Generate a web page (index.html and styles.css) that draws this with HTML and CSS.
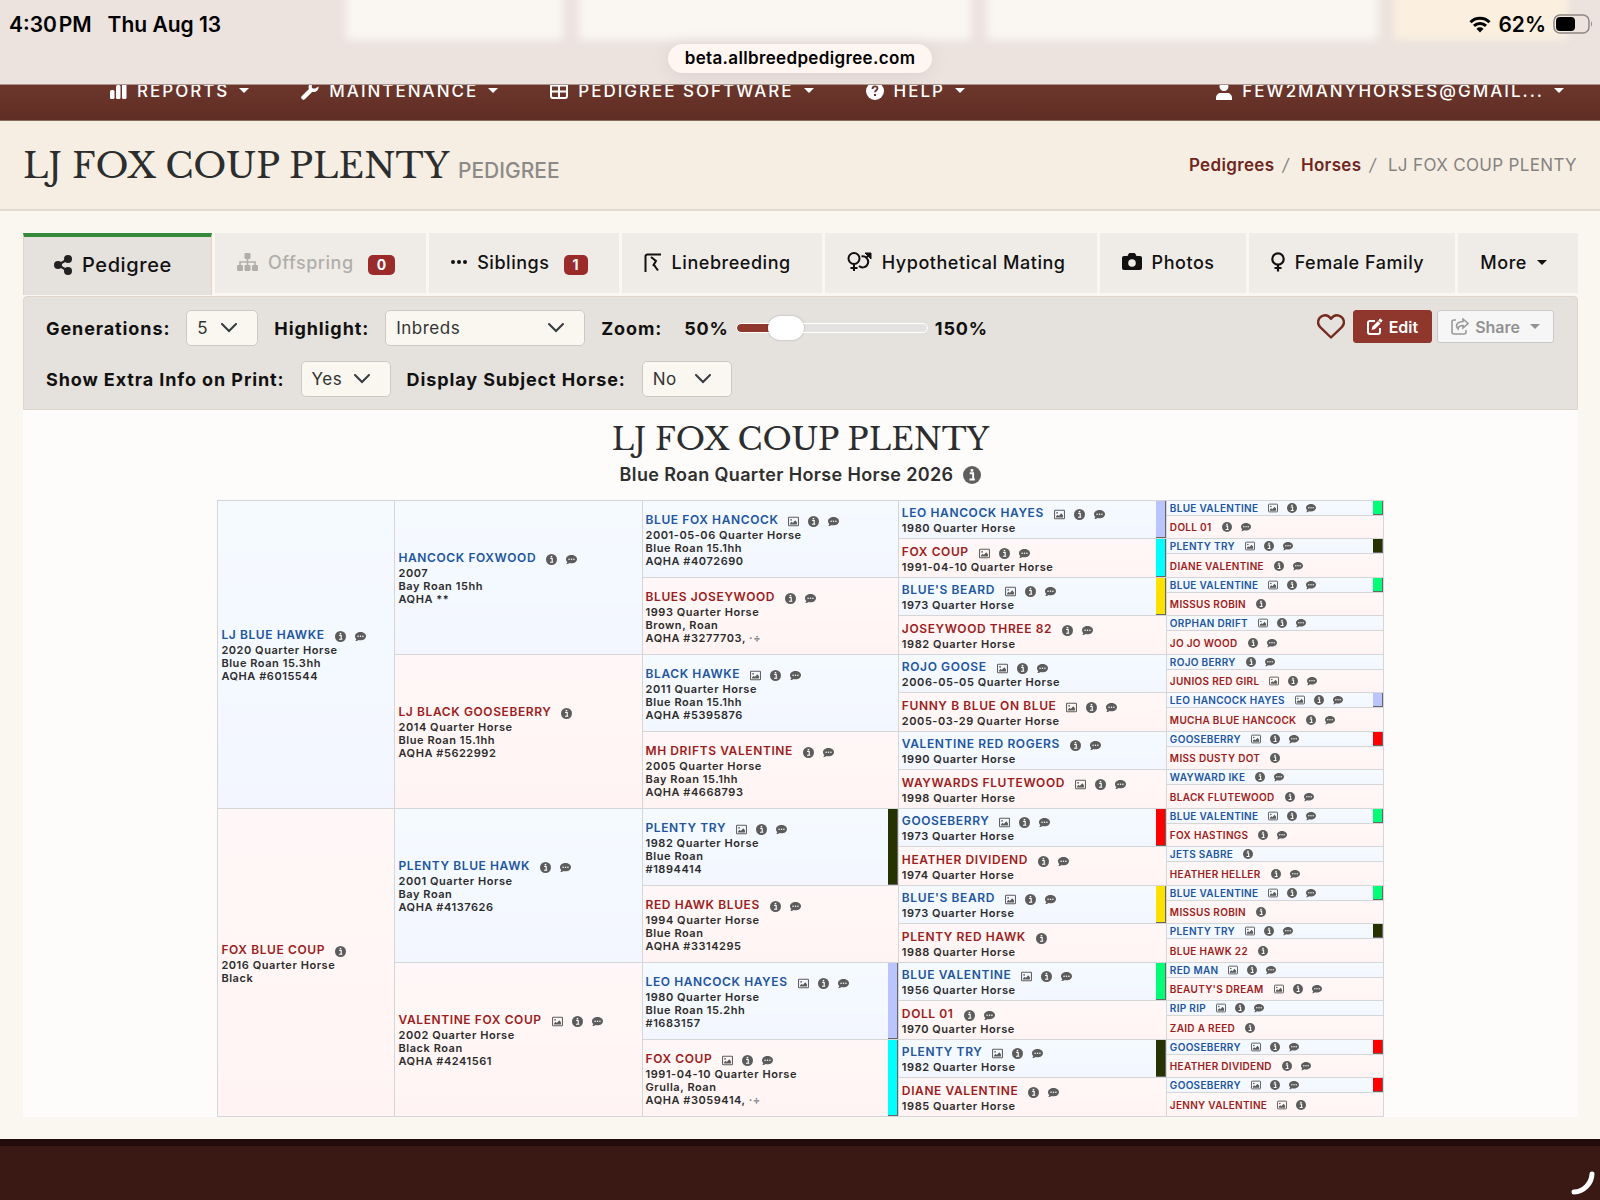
FILE: index.html
```
<!DOCTYPE html>
<html lang="en">
<head>
  <meta charset="UTF-8" />
  <meta name="viewport" content="width=device-width, initial-scale=1.0"/>
  <title>LJ FOX COUP PLENTY - Pedigree</title>
  <link rel="stylesheet" href="styles.css">
</head>
<body>
  <svg class="sprite" aria-hidden="true">
    <symbol id="i-info" viewBox="0 0 16 16"><circle cx="8" cy="8" r="8" fill="currentColor"/><path d="M6 6.500h3v5M5.800 12h4.800" fill="none" stroke="#fff" stroke-width="1.700"/><rect x="6.800" y="2.800" width="2.300" height="2.200" fill="#fff"/></symbol>
    <symbol id="i-chat" viewBox="0 0 16 16"><path d="M8 1.500c4.400 0 8 2.700 8 6s-3.600 6-8 6c-1 0-2-.1-2.900-.4-1 .8-2.700 1.600-4.800 1.600.9-.9 1.500-2 1.600-3C.7 10.600 0 9.200 0 7.500c0-3.300 3.600-6 8-6z" fill="currentColor"/><g fill="#fff"><circle cx="4.500" cy="7.500" r="1.100"/><circle cx="8" cy="7.500" r="1.100"/><circle cx="11.500" cy="7.500" r="1.100"/></g></symbol>
    <symbol id="i-image" viewBox="0 0 16 16"><rect x=".8" y="1.800" width="14.400" height="12.400" rx="1" fill="none" stroke="currentColor" stroke-width="1.500"/><circle cx="4.500" cy="5.500" r="1.300" fill="currentColor"/><path d="M3 12.500v-2l2.500-2 1.500 1.500L10.500 6 13 9v3.500z" fill="currentColor"/></symbol>
  </svg>

  <header class="browser-bar">
    <div class="backdrop"><i></i><i></i><i></i><i class="gold"></i></div>
    <div class="status">
      <span>4:30&#8202;PM</span>
      <span>Thu Aug 13</span>
      <div class="status-right">
        <svg width="22" height="17" viewBox="0 0 22 17" fill="none" stroke="#000" stroke-width="3"><path d="M1.500 6.200a13.500 13.500 0 0 1 19 0M5 9.900a8.500 8.500 0 0 1 12 0"/><path d="M11 16.500l-3.500-3.700a5 5 0 0 1 7 0z" fill="#000" stroke="none"/></svg>
        <span>62%</span>
        <svg width="40" height="20" viewBox="0 0 40 20"><rect x="1" y="1" width="35" height="18" rx="6" fill="none" stroke="#8f8785" stroke-width="1.500"/><rect x="3" y="3" width="19" height="14" rx="4"/><path d="M38 7q2 3 0 6z" fill="#8f8785"/></svg>
      </div>
    </div>
    <div class="address">beta.allbreedpedigree.com</div>
  </header>

  <nav class="main-nav">
    <a href="#"><svg width="17" height="18" viewBox="0 0 17 18" fill="#fff"><rect y="8" width="4.500" height="9" rx="1.500"/><rect x="6" y="3" width="4.500" height="14" rx="1.500"/><rect x="12" y="0" width="4.500" height="17" rx="1.500"/></svg>Reports<b class="caret"></b></a>
    <a href="#"><svg width="18" height="18" viewBox="0 0 18 18"><path d="M2.500 15.500L10 8" stroke="#fff" stroke-width="4.500" stroke-linecap="round"/><path d="M17.500 4.500a5 5 0 1 1-4-4.300L10.800 3v3.500h3.500z" fill="#fff"/></svg>Maintenance<b class="caret"></b></a>
    <a href="#"><svg width="18" height="18" viewBox="0 0 18 18" fill="none" stroke="#fff" stroke-width="2"><rect x="1" y="2" width="16" height="14" rx="2"/><path d="M1 3h16" stroke-width="3"/><path d="M9 3v13M1 9.500h16"/></svg>Pedigree Software<b class="caret"></b></a>
    <a href="#"><svg width="18" height="18" viewBox="0 0 18 18"><circle cx="9" cy="9" r="9" fill="#fff"/><path d="M6.500 7c0-3.500 5-3.500 5-.7 0 1.900-2.500 1.900-2.500 4" fill="none" stroke="#653026" stroke-width="1.800"/><rect x="8" y="12" width="2" height="2" fill="#653026"/></svg>Help<b class="caret"></b></a>
    <a href="#" class="user"><svg width="16" height="18" viewBox="0 0 16 18" fill="#fff"><circle cx="8" cy="4.500" r="4.500"/><path d="M0 18v-2c0-3 2-5 5-5h6c3 0 5 2 5 5v2z"/></svg>few2manyhorses@gmail...<b class="caret"></b></a>
  </nav>

  <section class="page-header">
    <h1>LJ FOX COUP PLENTY <small>PEDIGREE</small></h1>
    <div class="breadcrumb"><a href="#">Pedigrees</a><i>/</i><a href="#">Horses</a><i>/</i><span>LJ FOX COUP PLENTY</span></div>
  </section>

  <main>
    <div class="tabs">
      <a href="#" class="tab active"><svg width="18" height="20" viewBox="0 0 18 20" fill="#222"><circle cx="4" cy="10" r="4"/><circle cx="14" cy="4" r="4"/><circle cx="14" cy="16" r="4"/><path d="M14 4L4 10l10 6" fill="none" stroke="#222" stroke-width="2.200"/></svg>Pedigree</a>
      <a href="#" class="tab disabled"><svg width="21" height="18" viewBox="0 0 21 18" fill="#b0aeab"><rect x="7.500" width="6" height="6" rx="1.200"/><rect y="12" width="6" height="6" rx="1.200"/><rect x="7.500" y="12" width="6" height="6" rx="1.200"/><rect x="15" y="12" width="6" height="6" rx="1.200"/><path d="M10.500 5v8M3 13V9h15v4" fill="none" stroke="#b0aeab" stroke-width="1.600"/></svg>Offspring<span class="badge">0</span></a>
      <a href="#" class="tab"><svg width="16" height="6" viewBox="0 0 16 6" fill="#111"><circle cx="2" cy="3" r="2"/><circle cx="8" cy="3" r="2"/><circle cx="14" cy="3" r="2"/></svg>Siblings<span class="badge">1</span></a>
      <a href="#" class="tab"><svg width="18" height="19" viewBox="0 0 18 19" fill="none" stroke="#111" stroke-width="2"><path d="M1.500 19V3.500q0-2 2-2H17M7 4l5 4-2.500 4 2 1.500M12 8l-1.500-1M10 12l4 5.500"/></svg>Linebreeding</a>
      <a href="#" class="tab"><svg width="25" height="20" viewBox="0 0 25 20" fill="none" stroke="#111" stroke-width="2"><circle cx="7" cy="6.500" r="5.500"/><path d="M7 12v7M3.500 16h7M14.500 4.500a5.500 5.500 0 1 1-2.500 9.500M19 6l4-4"/><path d="M18 1h6v6z" fill="#111" stroke-width="1"/></svg>Hypothetical Mating</a>
      <a href="#" class="tab"><svg width="20" height="18" viewBox="0 0 20 18"><path d="M2 3h3.500L6.500 1q.4-1 1.500-1h4q1 0 1.500 1l1 2H18q2 0 2 2v10q0 2-2 2H2q-2 0-2-2V5q0-2 2-2z" fill="#111"/><circle cx="10" cy="10" r="3.800" fill="#efece7"/></svg>Photos</a>
      <a href="#" class="tab"><svg width="14" height="20" viewBox="0 0 14 20" fill="none" stroke="#111" stroke-width="2.200"><circle cx="7" cy="7" r="5.700"/><path d="M7 12.500V19.500M3.500 16h7"/></svg>Female Family</a>
      <a href="#" class="tab">More<b class="caret"></b></a>
    </div>

    <form class="toolbar">
      <div class="options">
        <div class="row">
          <label for="generations">Generations:</label>
          <select id="generations" class="w-sm"><option>5</option></select>
          <label for="highlight">Highlight:</label>
          <select id="highlight" class="w-lg"><option>Inbreds</option></select>
          <label for="zoom">Zoom:</label>
          <div class="zoom"><span>50%</span><input type="range" id="zoom" min="50" max="150" value="70"><span>150%</span></div>
        </div>
        <div class="row">
          <label for="extra">Show Extra Info on Print:</label>
          <select id="extra" class="w-md"><option>Yes</option></select>
          <label for="subject">Display Subject Horse:</label>
          <select id="subject" class="w-md"><option>No</option></select>
        </div>
      </div>
      <div class="actions">
        <button type="button" class="like" aria-label="Favorite"><svg width="28" height="25" viewBox="0 0 28 25" fill="none" stroke="#742a20" stroke-width="2.400" stroke-linejoin="round"><path d="M14 23.500L3.200 13.200C-.5 9.500 1 3.500 5.500 1.800 9 .5 12 2 14 4.800 16 2 19 .5 22.500 1.800 27 3.500 28.500 9.500 24.800 13.200z"/></svg></button>
        <button type="button" class="btn btn-edit"><svg width="16" height="17" viewBox="0 0 16 17" fill="none" stroke="#fff" stroke-width="2"><path d="M8 3H3Q1 3 1 5v9q0 2 2 2h8q2 0 2-2v-4"/><path d="M5.500 8.500L11 3l2.500 2.500L8 11l-3.500 1z" fill="#fff" stroke="none"/><path d="M11.800 2.200L13.200.8l2 2-1.400 1.400z" fill="#fff" stroke="#fff" stroke-width="1"/></svg>Edit</button>
        <button type="button" class="btn btn-share"><svg width="18" height="17" viewBox="0 0 18 17" fill="none" stroke="#999" stroke-width="1.600"><path d="M5 2H3Q1 2 1 4v10q0 2 2 2h10q2 0 2-2v-2"/><path d="M12 1l5 4.500L12 10V7.500C9 7.500 7.500 8.500 7 11 3.500 7 7 3.500 12 3.500z"/></svg>Share<b class="caret"></b></button>
      </div>
    </form>

    <div class="pedigree">
      <h2>LJ FOX COUP PLENTY</h2>
      <h3>Blue Roan Quarter Horse Horse 2026 <svg class="icon-lg"><use href="#i-info"/></svg></h3>
      <table id="pedigree"></table>
    </div>
  </main>

  <footer>
    <svg class="spinner" width="26" height="26" viewBox="0 0 26 26" fill="none" stroke="#fff" stroke-width="5" stroke-linecap="round"><path d="M22 4A19 19 0 0 1 4 22"/></svg>
  </footer>

  <script src="script.js"></script>
</body>
</html>
```
FILE: styles.css
```
* {
  box-sizing: border-box;
}

body {
  margin: 0;
  min-height: 100vh;
  display: flex;
  flex-direction: column;
  background: #faf7f1;
  color: #111;
  font-family: Inter, "Open Sans", sans-serif;
  font-size: 18px;
}

a {
  color: inherit;
  text-decoration: none;
}

svg {
  flex-shrink: 0;
}

.sprite {
  position: absolute;
  width: 0;
  height: 0;
}

.caret {
  border: 5px solid transparent;
  border-top-color: currentColor;
  border-bottom: 0;
}

/* browser bar */
.browser-bar {
  position: relative;
  z-index: 2;
  height: 85px;
  overflow: hidden;
  background: #ece2de;
  border-bottom: 1px solid #a8948e;
  color: #000;
}

.backdrop {
  position: absolute;
  inset: -10px 32px auto 346px;
  height: 50px;
  display: flex;
  gap: 16px;
  filter: blur(5px);
}

.backdrop i {
  flex: 9;
  background: #faf7f2;
}

.backdrop i:first-child {
  flex: 5;
}

.backdrop .gold {
  flex: 4;
  background: #fbf0df;
}

.status {
  position: relative;
  display: flex;
  align-items: center;
  gap: 16px;
  height: 48px;
  padding: 0 7px 0 9px;
  font-size: 21px;
  font-weight: 600;
}

.status-right {
  display: flex;
  align-items: center;
  gap: 7px;
  margin-left: auto;
}

.address {
  position: relative;
  width: max-content;
  margin: -4px auto 0;
  padding: 0 17px;
  border-radius: 15px;
  background: #fff6f1;
  box-shadow: 0 2px 20px rgba(0, 0, 0, 0.08);
  font-size: 17px;
  line-height: 29px;
  font-weight: 600;
  letter-spacing: 0.02em;
}

/* nav */
.main-nav {
  display: flex;
  align-items: center;
  gap: 52px;
  height: 60px;
  margin-top: -24px;
  padding: 0 36px 0 110px;
  background: linear-gradient(#743c30, #602d24);
  border-bottom: 1px solid #8a6a5c;
  color: #fff;
  font-size: 17px;
  font-weight: 500;
  letter-spacing: 2px;
  text-transform: uppercase;
}

.main-nav a {
  display: flex;
  align-items: center;
  gap: 10px;
}

.main-nav .user {
  margin-left: auto;
}

/* title */
.page-header {
  display: flex;
  justify-content: space-between;
  align-items: center;
  height: 90px;
  padding: 0 23px;
  background: #f6eee3;
  border-bottom: 2px solid #e2dbd2;
}

h1,
h2 {
  margin: 0;
  color: #2b2d2e;
  font-family: "Libre Baskerville", "Liberation Serif", serif;
  font-weight: 400;
  font-size: 35px;
}

h1 small {
  color: #8b8a88;
  font-family: Inter, sans-serif;
  font-size: 21px;
  font-weight: 500;
}

.breadcrumb {
  display: flex;
  gap: 8px;
  color: #858381;
  font-size: 17px;
  letter-spacing: 0.02em;
}

.breadcrumb a {
  color: #6e261e;
  font-weight: 600;
}

.breadcrumb i {
  margin-right: 4px;
}

main {
  padding: 22px 22px 22px 23px;
}

/* tabs */
.tabs {
  display: flex;
  gap: 3px;
  height: 62px;
}

.tab {
  display: flex;
  flex: 1 1 auto;
  align-items: center;
  gap: 10px;
  height: 60px;
  padding: 0 29px 2px 22px;
  background: #efece7;
  font-weight: 500;
  letter-spacing: 0.03em;
  white-space: nowrap;
}

.tab.active {
  height: 62px;
  padding: 0 37px 3px 30px;
  background: #e5e1dc;
  border: 1px solid #e2d5c5;
  border-top: 4px solid #368a3c;
  border-bottom: 0;
  font-size: 20px;
}

.tab.disabled {
  color: #b0aeab;
}

.badge {
  margin: 6px 0 0 4px;
  padding: 0 9px;
  border-radius: 5px;
  background: #9b2a2b;
  color: #fff;
  font-size: 14px;
  line-height: 20px;
  font-weight: 700;
  letter-spacing: 0;
}

/* toolbar */
.toolbar {
  display: flex;
  justify-content: space-between;
  margin-top: 1px;
  padding: 13px 23px 12px 22px;
  background: #e5e1dc;
  border: 1px solid #e0d5c8;
  border-radius: 4px 4px 0 0;
}

.options {
  display: flex;
  flex-direction: column;
  gap: 15px;
  font-weight: 700;
  letter-spacing: 0.05em;
}

.row,
.zoom,
.actions {
  display: flex;
  align-items: center;
}

.row {
  gap: 16px;
}

select {
  height: 36px;
  padding: 0 10px;
  border: 1px solid #cbc9c6;
  border-radius: 5px;
  appearance: none;
  background: #faf7f1 url("data:image/svg+xml,%3Csvg xmlns='http://www.w3.org/2000/svg' width='16' height='10' fill='none' stroke='%23343a40' stroke-width='2' stroke-linecap='round'%3E%3Cpath d='M1 1l7 7 7-7'/%3E%3C/svg%3E") no-repeat right 20px center;
  color: #333;
  font-family: inherit;
  font-size: 17px;
  letter-spacing: 0.03em;
}

.w-sm {
  width: 72px;
}

.w-md {
  width: 90px;
}

.w-lg {
  width: 200px;
}

.zoom {
  gap: 8px;
  margin-left: 6px;
}

.zoom input {
  width: 190px;
  height: 8px;
  margin: 0;
  appearance: none;
  border-radius: 4px;
  outline: 1px solid #fff;
  background: linear-gradient(90deg, #8f372d 24%, #e3e2e1 24%);
}

.zoom input::-webkit-slider-thumb {
  appearance: none;
  width: 36px;
  height: 24px;
  border-radius: 12px;
  background: #fff;
  box-shadow: 0 0 2px rgba(0, 0, 0, 0.3);
}

.actions {
  align-self: flex-start;
  gap: 5px;
}

.like {
  display: flex;
  padding: 3px;
  border: 0;
  background: none;
}

.btn {
  display: flex;
  align-items: center;
  gap: 6px;
  height: 33px;
  padding: 0 13px;
  border: 1px solid #c9c9c9;
  border-radius: 3px;
  background: #f6f6f6;
  color: #929292;
  font-family: inherit;
  font-size: 16px;
  font-weight: 600;
}

.btn-edit {
  border-color: #8f372d;
  background: #8f372d;
  color: #fff;
}

.btn-share .caret {
  margin-left: 4px;
}

/* pedigree */
.pedigree {
  background: #fdfcfa;
  text-align: center;
}

.pedigree h2 {
  padding-top: 9px;
  font-size: 31px;
  line-height: 40px;
}

.pedigree h3 {
  display: flex;
  justify-content: center;
  align-items: center;
  gap: 10px;
  margin: 3px 0 12px;
  color: #2f2f2f;
  font-size: 18px;
  line-height: 26px;
  font-weight: 600;
  letter-spacing: 0.02em;
}

.icon-lg {
  width: 18px;
  height: 18px;
  color: #5f5f5f;
}

table {
  width: 75%;
  margin: 0 auto;
  border-collapse: collapse;
  table-layout: fixed;
  text-align: left;
}

.gen1 { width: 15.2%; }
.gen2 { width: 21.2%; }
.gen3 { width: 22%; }
.gen4 { width: 23%; }
.gen5 { width: 18.6%; }

tr {
  height: 15px;
}

tr:nth-child(2n) {
  height: 23px;
}

tr:nth-child(4n) {
  height: 24px;
}

td {
  position: relative;
  padding: 0 3px;
  border: 1px solid #d4d6d8;
  color: #2c2c2c;
  font-size: 11px;
  line-height: 13px;
  font-weight: 600;
  letter-spacing: 0.05em;
  white-space: nowrap;
}

td.sire {
  background: linear-gradient(#f5faff, #f3f6ff);
}

td.dam {
  background: linear-gradient(#fff7f7, #fff4f3);
}

.name {
  display: flex;
  align-items: center;
  gap: 9px;
  font-size: 12px;
  line-height: 18px;
  letter-spacing: 0.05em;
}

.gen5 .name {
  font-size: 10px;
  line-height: 12px;
  letter-spacing: 0.03em;
}

.sire .name a {
  color: #20559f;
}

.dam .name a {
  color: #9c1c20;
}

.name a {
  margin-right: 1px;
}

.icon {
  width: 11px;
  height: 11px;
  margin-top: 3px;
  color: #5c5c5c;
}

.gen5 .icon {
  width: 10px;
  height: 10px;
  margin-top: 0;
}

.note {
  color: #777;
}

.swatch {
  position: absolute;
  top: 0;
  right: 0;
  bottom: 0;
  width: 10px;
  border: solid #666;
  border-width: 0 1px 1px 0;
}

footer {
  position: relative;
  flex: 1;
  border-top: 7px solid #220b0a;
  background: #3a1813;
}

.spinner {
  position: absolute;
  right: 4px;
  bottom: 4px;
}
```
FILE: script.js
```
// name | icons (p = photo, i = info, c = comments) | inbred color | detail lines...
const generations = [
  [
    'LJ BLUE HAWKE|ic||2020 Quarter Horse|Blue Roan 15.3hh|AQHA #6015544',
    'FOX BLUE COUP|i||2016 Quarter Horse|Black'
  ],
  [
    'HANCOCK FOXWOOD|ic||2007|Bay Roan 15hh|AQHA **',
    'LJ BLACK GOOSEBERRY|i||2014 Quarter Horse|Blue Roan 15.1hh|AQHA #5622992',
    'PLENTY BLUE HAWK|ic||2001 Quarter Horse|Bay Roan|AQHA #4137626',
    'VALENTINE FOX COUP|pic||2002 Quarter Horse|Black Roan|AQHA #4241561'
  ],
  [
    'BLUE FOX HANCOCK|pic||2001-05-06 Quarter Horse|Blue Roan 15.1hh|AQHA #4072690',
    'BLUES JOSEYWOOD|ic||1993 Quarter Horse|Brown, Roan|AQHA #3277703, <span class="note">·÷</span>',
    'BLACK HAWKE|pic||2011 Quarter Horse|Blue Roan 15.1hh|AQHA #5395876',
    'MH DRIFTS VALENTINE|ic||2005 Quarter Horse|Bay Roan 15.1hh|AQHA #4668793',
    'PLENTY TRY|pic|#263300|1982 Quarter Horse|Blue Roan|#1894414',
    'RED HAWK BLUES|ic||1994 Quarter Horse|Blue Roan|AQHA #3314295',
    'LEO HANCOCK HAYES|pic|#bac4ff|1980 Quarter Horse|Blue Roan 15.2hh|#1683157',
    'FOX COUP|pic|#00ffff|1991-04-10 Quarter Horse|Grulla, Roan|AQHA #3059414, <span class="note">·÷</span>'
  ],
  [
    'LEO HANCOCK HAYES|pic|#bac4ff|1980 Quarter Horse',
    'FOX COUP|pic|#00ffff|1991-04-10 Quarter Horse',
    "BLUE'S BEARD|pic|#ffe100|1973 Quarter Horse",
    'JOSEYWOOD THREE 82|ic||1982 Quarter Horse',
    'ROJO GOOSE|pic||2006-05-05 Quarter Horse',
    'FUNNY B BLUE ON BLUE|pic||2005-03-29 Quarter Horse',
    'VALENTINE RED ROGERS|ic||1990 Quarter Horse',
    'WAYWARDS FLUTEWOOD|pic||1998 Quarter Horse',
    'GOOSEBERRY|pic|#ff0000|1973 Quarter Horse',
    'HEATHER DIVIDEND|ic||1974 Quarter Horse',
    "BLUE'S BEARD|pic|#ffe100|1973 Quarter Horse",
    'PLENTY RED HAWK|i||1988 Quarter Horse',
    'BLUE VALENTINE|pic|#00ff77|1956 Quarter Horse',
    'DOLL 01|ic||1970 Quarter Horse',
    'PLENTY TRY|pic|#263300|1982 Quarter Horse',
    'DIANE VALENTINE|ic||1985 Quarter Horse'
  ],
  [
    'BLUE VALENTINE|pic|#00ff77',
    'DOLL 01|ic|',
    'PLENTY TRY|pic|#263300',
    'DIANE VALENTINE|ic|',
    'BLUE VALENTINE|pic|#00ff77',
    'MISSUS ROBIN|i|',
    'ORPHAN DRIFT|pic|',
    'JO JO WOOD|ic|',
    'ROJO BERRY|ic|',
    'JUNIOS RED GIRL|pic|',
    'LEO HANCOCK HAYES|pic|#bac4ff',
    'MUCHA BLUE HANCOCK|ic|',
    'GOOSEBERRY|pic|#ff0000',
    'MISS DUSTY DOT|i|',
    'WAYWARD IKE|ic|',
    'BLACK FLUTEWOOD|ic|',
    'BLUE VALENTINE|pic|#00ff77',
    'FOX HASTINGS|ic|',
    'JETS SABRE|i|',
    'HEATHER HELLER|ic|',
    'BLUE VALENTINE|pic|#00ff77',
    'MISSUS ROBIN|i|',
    'PLENTY TRY|pic|#263300',
    'BLUE HAWK 22|i|',
    'RED MAN|pic|',
    "BEAUTY'S DREAM|pic|",
    'RIP RIP|pic|',
    'ZAID A REED|i|',
    'GOOSEBERRY|pic|#ff0000',
    'HEATHER DIVIDEND|ic|',
    'GOOSEBERRY|pic|#ff0000',
    'JENNY VALENTINE|pi|'
  ]
];

const icons = { p: 'image', i: 'info', c: 'chat' };

function cell(horse, gen, index, span) {
  const [name, marks, color, ...lines] = horse.split('|');
  const sex = index % 2 ? 'dam' : 'sire';
  let html = `<td rowspan="${span}" class="gen${gen} ${sex}"><div class="name"><a href="#">${name}</a>`;
  for (const m of marks) {
    html += `<svg class="icon"><use href="#i-${icons[m]}"/></svg>`;
  }
  html += '</div>' + lines.map(line => `<div>${line}</div>`).join('');
  if (color) {
    html += `<span class="swatch" style="background: ${color}"></span>`;
  }
  return html + '</td>';
}

let rows = '';
for (let r = 0; r < 32; r++) {
  rows += '<tr>';
  generations.forEach((horses, g) => {
    const span = 32 / horses.length;
    if (r % span === 0) {
      rows += cell(horses[r / span], g + 1, r / span, span);
    }
  });
  rows += '</tr>';
}
document.getElementById('pedigree').innerHTML = rows;
```
